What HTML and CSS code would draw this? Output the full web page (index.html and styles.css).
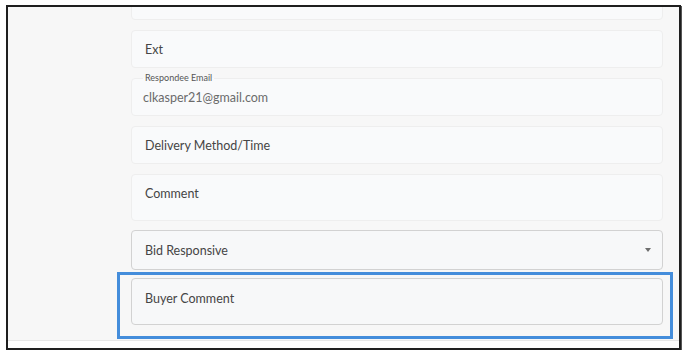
FILE: index.html
```html
<!DOCTYPE html>
<html lang="en">
<head>
    <meta charset="UTF-8">
    <meta name="viewport" content="width=device-width, initial-scale=1.0">
    <title>Bid Response</title>
    <link rel="stylesheet" href="styles.css">
</head>
<body>
    <!-- Screenshot frame -->
    <div class="frame">
        <div class="page">
            <div class="form-col">
                <div class="field field-cut"></div>
                <div class="field">Ext</div>
                <fieldset class="field field-filled">
                    <legend>Respondee Email</legend>
                    <span class="value">clkasper21@gmail.com</span>
                </fieldset>
                <div class="field">Delivery Method/Time</div>
                <div class="field field-area">Comment</div>
                <div class="field field-select">
                    <span>Bid Responsive</span>
                    <span class="caret"></span>
                </div>
                <div class="highlight-wrap">
                    <div class="field field-area field-outlined">Buyer Comment</div>
                    <div class="highlight"></div>
                </div>
            </div>
        </div>
        <div class="page-footer"></div>
    </div>
</body>
</html>
```

FILE: styles.css
```css
/* General */
body {
    margin: 0;
    padding: 5px 0 0 6px;
    background: #ffffff;
    font-family: 'Lato', 'Open Sans', sans-serif;
    color: #454545;
}

/* Outer screenshot border */
.frame {
    width: 671px;
    border: 2px solid #1e1e1e;
    box-shadow: 1px 1px 0 #555;
    background: #ffffff;
}

.page {
    height: 333px;
    overflow: hidden;
    background-color: #f7f7f7;
    padding: 0 16px 0 123px;
}

.page-footer {
    height: 7px;
    border-top: 1px solid #e6e6e6;
    background: #fdfdfd;
}

/* Form column */
.form-col {
    display: flex;
    flex-direction: column;
    margin-top: -25px;
}

.field {
    box-sizing: border-box;
    height: 38px;
    margin: 0 0 10px 0;
    padding: 0 13px;
    display: flex;
    align-items: center;
    font-size: 12.5px;
    background-color: #f9fafb;
    border: 1px solid #eeeeee;
    border-radius: 4px;
}

.field-filled {
    height: 43px;
    margin-top: -5px;
    padding: 0 11px;
    min-width: 0;
    display: block;
}

.field-filled legend {
    font-size: 9px;
    line-height: 10px;
    padding: 0 2px;
    margin-left: 0;
    color: #555;
}

.field-filled .value {
    display: block;
    margin-top: 7px;
    font-size: 12.5px;
    color: #6b6b6b;
}

.field-area {
    height: 47px;
    align-items: flex-start;
    padding-top: 11px;
}

.field-select {
    height: 40px;
    margin-top: -1px;
    margin-bottom: 8px;
    justify-content: space-between;
    padding-right: 11px;
    background-color: #f7f8f9;
    border-color: #d2d2d2;
}

.caret {
    width: 0;
    height: 0;
    border-left: 3px solid transparent;
    border-right: 3px solid transparent;
    border-top: 4px solid #6e6e6e;
}

.field-outlined {
    border-color: #d2d2d2;
    background-color: #f7f8f9;
    padding-top: 12px;
}

/* Annotation box */
.highlight-wrap {
    position: relative;
}

.highlight {
    position: absolute;
    top: -6px;
    left: -14px;
    right: -10px;
    bottom: -4px;
    border: 3px solid #448ddb;
    pointer-events: none;
}
```
